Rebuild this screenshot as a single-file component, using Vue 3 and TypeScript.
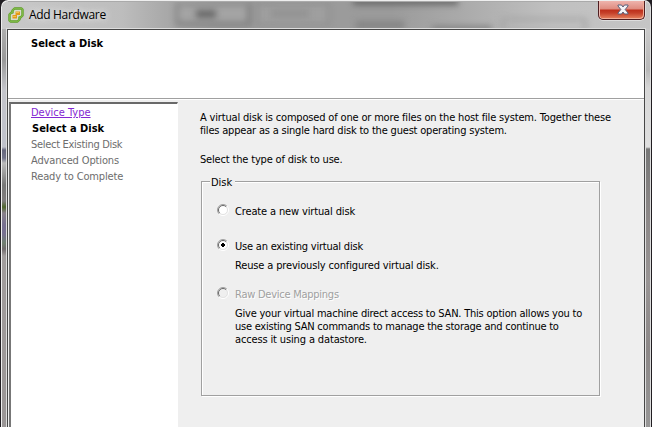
<script setup lang="ts">
interface Step { label: string; state: 'done' | 'current' | 'pending' }
interface DiskOption { id: string; label: string; lines: string[]; disabled?: boolean }

const steps: Step[] = [
  { label: 'Device Type', state: 'done' },
  { label: 'Select a Disk', state: 'current' },
  { label: 'Select Existing Disk', state: 'pending' },
  { label: 'Advanced Options', state: 'pending' },
  { label: 'Ready to Complete', state: 'pending' },
]
const intro: string[] = [
  'A virtual disk is composed of one or more files on the host file system. Together these',
  'files appear as a single hard disk to the guest operating system.',
]
const options: DiskOption[] = [
  { id: 'create', label: 'Create a new virtual disk', lines: [] },
  { id: 'existing', label: 'Use an existing virtual disk', lines: ['Reuse a previously configured virtual disk.'] },
  {
    id: 'raw',
    label: 'Raw Device Mappings',
    disabled: true,
    lines: [
      'Give your virtual machine direct access to SAN. This option allows you to',
      'use existing SAN commands to manage the storage and continue to',
      'access it using a datastore.',
    ],
  },
]
const selected = 'existing'
</script>

<template>
  <div class="backdrop">
    <div class="window">
      <header class="titlebar">
        <div class="glass" aria-hidden="true">
          <i class="ghost g1"></i><i class="ghost g2"></i><i class="ghost g3"></i>
          <i class="ghost g4"></i><i class="ghost g5"></i><i class="ghost g6"></i><i class="ghost g7"></i><i class="ghost g8"></i>
        </div>
        <svg class="logo" width="16" height="16" viewBox="0 0 16 16">
          <path d="M6.500 1.500H13.500L14.500 2.500V8.500L12.500 10.500H11.500V12.500L9.500 14.500H2.500L1.500 13.500V7.500L3.500 5.500H4.500V3.500Z" fill="#d9dccf" stroke="#5f9c27" stroke-width="2.400" stroke-linejoin="round" />
          <path d="M6.500 1.500H13.500L14.500 2.500V8.500L12.500 10.500H11.500V12.500L9.500 14.500H2.500L1.500 13.500V7.500L3.500 5.500H4.500V3.500Z" fill="none" stroke="#7cb944" stroke-width="1.200" stroke-linejoin="round" />
          <path d="M7.500 4.500H12V8H9V11.500H4.500V8H7.500Z" fill="#e39a1a" />
          <path d="M8 5H11V6H8ZM5 9H8V10H5Z" fill="#f6c04a" />
        </svg>
        <span class="title">Add Hardware</span>
        <button class="close" aria-label="Close">
          <svg width="12" height="11" viewBox="0 0 12 11">
            <path d="M1 1H4.500L6 3L7.500 1H11V2L8.200 5.500L11 9V10H7.500L6 8L4.500 10H1V9L3.800 5.500L1 2Z" fill="#f4f4f6" stroke="#59607b" stroke-width="1" />
          </svg>
        </button>
      </header>
      <main class="client">
        <section class="heading"><b>Select a Disk</b></section>
        <div class="body">
          <nav class="steps">
            <div v-for="(s, i) in steps" :key="s.label" class="step" :class="[s.state, 's' + i]"><span>{{ s.label }}</span></div>
          </nav>
          <section class="page">
            <p v-for="(l, i) in intro" :key="i" class="line" :class="'intro' + i">{{ l }}</p>
            <p class="line prompt">Select the type of disk to use.</p>
            <div class="group">
              <span class="legend">Disk</span>
              <div v-for="o in options" :key="o.id" class="option" :class="[o.id, { disabled: o.disabled }]">
                <svg class="radio" width="12" height="12" viewBox="0 0 12 12">
                  <circle cx="6" cy="6" r="4.500" :fill="o.disabled ? '#efefef' : '#fff'" />
                  <path d="M2.100 9.900A5.500 5.500 0 0 1 9.900 2.100" fill="none" stroke="#a0a0a0" />
                  <path d="M2.800 9.200A4.500 4.500 0 0 1 9.200 2.800" fill="none" stroke="#696969" />
                  <path d="M9.900 2.100A5.500 5.500 0 0 1 2.100 9.900" fill="none" stroke="#fff" />
                  <path d="M9.200 2.800A4.500 4.500 0 0 1 2.800 9.200" fill="none" stroke="#e3e3e3" />
                  <path v-if="o.id === selected" d="M5 4H7V5H8V7H7V8H5V7H4V5H5Z" fill="#000" />
                </svg>
                <div class="copy">
                  <p class="line label">{{ o.label }}</p>
                  <p v-for="(l, i) in o.lines" :key="i" class="line detail" :class="'d' + i">{{ l }}</p>
                </div>
              </div>
            </div>
          </section>
        </div>
      </main>
    </div>
  </div>
</template>

<style>
body { margin: 0; overflow: hidden; }
</style>
<style scoped>
* { box-sizing: border-box; }
p { margin: 0; }
.backdrop { width: 652px; height: 427px; overflow: hidden; background: #211e22; }
.window {
  position: relative; width: 650px; height: 440px; margin-left: 1px; padding-top: 1px;
  background:
    linear-gradient(#d5d5d5, #b8b8b8 70px, #d6d6d6 88px, #dfdfdf 147px, #777 149px, #8d8989 220px, #999595 280px, #8c8888 350px, #999) right 0 top 0 / 6px 100% no-repeat,
    linear-gradient(#c8c8c8, #aaa 35px, #999 60px, #c4c5cb 90px, #bfc1ca 147px, #66677c 150px, #73758a 158px, #bbb 163px, #777 185px, #807d7d 201px, #4f662d 207px, #89818a 213px, #777090 225px, #777090 234px, #708070 243px, #716b6d 249px, #a19d9d 256px, #999595) left / 7px 100% no-repeat,
    #aaa;
  border-radius: 7px 7px 0 0;
  box-shadow: inset 1px 1px #eee, inset -1px 0 #ddd;
}
.titlebar {
  position: relative; display: flex; align-items: flex-start; height: 27px; margin: 1px 1px 0;
  padding: 5px 6px 0; border-radius: 5px 5px 0 0;
}
.glass {
  position: absolute; inset: 0; overflow: hidden; border-radius: 5px 5px 0 0;
  background: linear-gradient(90deg, #c9c9c9 0, #bdbdbd 120px, #a9a9a9 163px, #9b9b9b 220px, #9b9b9b 390px, #aaa 460px, #c0c0c0 550px, #c5c5c5);
}
.ghost { position: absolute; display: block; filter: blur(3px); }
.g1 { left: 173px; top: 0; width: 76px; height: 24px; border: 4px solid #7d7d7d; border-top-color: #8f8f8f; border-left-color: #898989; background: #a4a4a4; }
.g2 { left: 194px; top: 8px; width: 20px; height: 8px; background: #686868; }
.g3 { left: 254px; top: 0; width: 74px; height: 24px; border: 3px solid #8f8f8f; background: #9f9f9f; }
.g4 { left: 269px; top: 8px; width: 38px; height: 7px; background: #919191; }
.g5 { left: 351px; top: -4px; width: 105px; height: 7px; background: #6a6a6a; }
.g6 { left: 354px; top: 19px; width: 48px; height: 8px; background: #858585; }
.g7 { left: 430px; top: 24px; width: 60px; height: 5px; background: #808080; }
.g8 { left: 499px; top: 16px; width: 86px; height: 15px; border: 3px solid #a4a4a4; }
.logo { position: relative; }
.title {
  position: relative; margin-left: 5px; font: 12px/16px "Open Sans", "Noto Sans", sans-serif; color: #000;
  letter-spacing: -0.33px; white-space: nowrap; text-shadow: 0 0 6px #eee, 0 0 8px #ddd;
}
.close {
  position: relative; display: flex; justify-content: center; width: 47px; height: 19px; padding: 3px 0 0 2px;
  margin: -6px -1px 0 auto; border: 1px solid #4f1d20; border-top: 0; border-radius: 0 0 5px 5px;
  background: linear-gradient(#eeb3ac, #df8b7f 8px, #bd2f1b 9px, #c5402a 12px, #e78460);
  box-shadow: inset 1px 0 #edb9b1, inset -1px -1px #f0ad98, 0 1px #ddd, 1px 0 #ddd;
}
.client {
  width: 638px; height: 410px; margin-left: 6px; border: 1px solid #464646; background: #efefef;
  box-shadow: 0 0 0 1px #ddd; position: relative;
  font: 11px/13px "DejaVu Sans Condensed", "DejaVu Sans", sans-serif; color: #000;
}
.heading {
  height: 68px; padding: 7px 23px; margin-bottom: 4px; background: #fff; letter-spacing: 0;
  box-shadow: 0 1px #a0a0a0, 0 2px #fff;
}
.body { display: flex; white-space: nowrap; }
.steps {
  width: 169px; height: 340px; margin-left: 1px; padding: 1px 0 0 20px; background: #fff;
  border: 2px solid #696969; border-left-color: #777; border-right: 1px solid #fff;
}
.step { height: 16px; line-height: 16px; color: #6d6d6d; letter-spacing: -0.14px; }
.step.s2 { letter-spacing: -0.3px; }
.step.done { color: #8427d2; text-decoration: underline; letter-spacing: 0; }
.step.current { color: #000; font-weight: bold; letter-spacing: 0; padding-left: 1px; }
.page { padding: 9px 0 0 22px; }
.line { height: 13px; letter-spacing: -0.17px; }
.intro1 { letter-spacing: -0.19px; }
.prompt { margin-top: 16px; }
.group {
  position: relative; display: grid; grid-template-rows: 35px 48px auto; width: 399px; height: 215px;
  margin: 15px 0 0 1px; padding: 22px 0 0 15px; border: 1px solid #a0a0a0;
  box-shadow: inset 1px 1px #fff, 1px 1px #fff;
}
.legend { position: absolute; left: 8px; top: -6px; width: 25px; padding-left: 1px; background: #efefef; }
.option { display: flex; }
.copy { margin-left: 6px; padding-top: 1px; }
.label { margin-bottom: 6px; letter-spacing: -0.14px; }
.existing .label { letter-spacing: -0.21px; }
.raw .label { letter-spacing: -0.25px; }
.existing .detail { letter-spacing: -0.15px; }
.raw .detail { letter-spacing: -0.21px; }
.raw .d1 { letter-spacing: -0.24px; }
.raw .d2 { letter-spacing: -0.14px; }
.disabled .label { color: #a0a0a0; text-shadow: 1px 1px #fff; }
</style>
